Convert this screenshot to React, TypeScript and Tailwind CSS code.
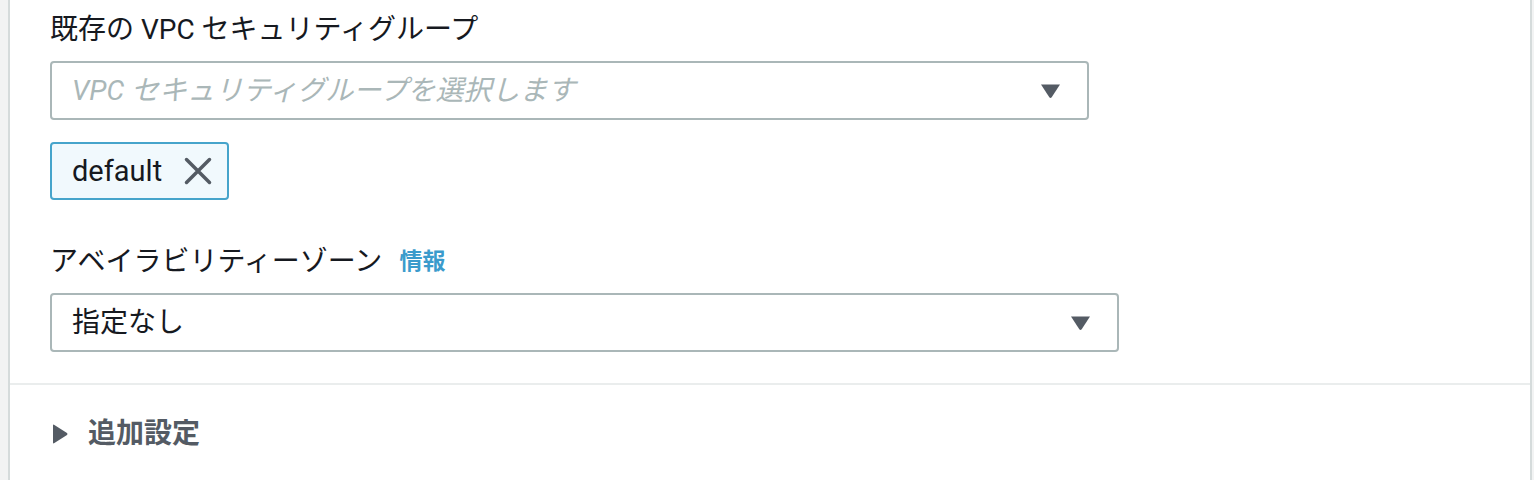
import { ReactNode } from "react";

const font = { fontFamily: 'Roboto, "Noto Sans CJK JP", sans-serif' };

const Caret = () => (
  <svg width="21" height="16" viewBox="0 0 21 16">
    <path d="M1 1.5 H20 L11.7 14.2 Q10.5 15.8 9.3 14.2 Z" fill="#545b64" />
  </svg>
);

const SelectBox = ({ width, children }: { width: string; children: ReactNode }) => (
  <div
    className={`${width} h-[59px] border-2 border-[#aab7b8] rounded-[4px] bg-white flex items-center justify-between pl-[20px] pr-[26px]`}
  >
    <div className="text-[28px] leading-[40px]">{children}</div>
    <Caret />
  </div>
);

export default function App() {
  return (
    <div className="w-[1534px] h-[480px] bg-[#f2f3f3] pl-[8px] pr-[2px] overflow-hidden" style={font}>
      <div className="h-full bg-white border-x-2 border-[#d5dbdb]">
        <div className="pl-[40px] pt-[10px] pb-[31px]">
          <div className="text-[28px] leading-[40px] text-[#16191f]">既存の VPC セキュリティグループ</div>

          <div className="mt-[11px]">
            <SelectBox width="w-[1039px]">
              <span className="italic text-[#aab7b8]">VPC セキュリティグループを選択します</span>
            </SelectBox>
          </div>

          <div className="mt-[22px] inline-flex items-center h-[58px] border-2 border-[#46a4cb] rounded-[4px] bg-[#f1f9fd] pl-[20px] pr-[15px] gap-[22px]">
            <span className="text-[29px] leading-[40px] text-[#16191f]">default</span>
            <svg width="28" height="28" viewBox="0 0 28 28">
              <path d="M2.5 2.5 L25.5 25.5 M25.5 2.5 L2.5 25.5" stroke="#545b64" strokeWidth="3.5" strokeLinecap="round" />
            </svg>
          </div>

          <div className="mt-[42px] flex items-center gap-[17px]">
            <span className="text-[28px] leading-[40px] text-[#16191f]">アベイラビリティーゾーン</span>
            <span className="text-[23px] leading-[40px] font-bold text-[#3b9bcc]">情報</span>
          </div>

          <div className="mt-[11px]">
            <SelectBox width="w-[1069px]">
              <span className="text-[#16191f]">指定なし</span>
            </SelectBox>
          </div>
        </div>

        <div className="border-t-2 border-[#eaeded] pl-[42px] pt-[29px] flex items-center gap-[20px]">
          <svg width="16" height="20" viewBox="0 0 16 20">
            <path d="M1 1.5 V18.5 Q1 20 2.4 19.1 L15 11.1 Q16 10 15 8.9 L2.4 0.9 Q1 0 1 1.5 Z" fill="#545b64" />
          </svg>
          <span className="text-[28px] leading-[40px] font-bold text-[#545b64]">追加設定</span>
        </div>
      </div>
    </div>
  );
}
